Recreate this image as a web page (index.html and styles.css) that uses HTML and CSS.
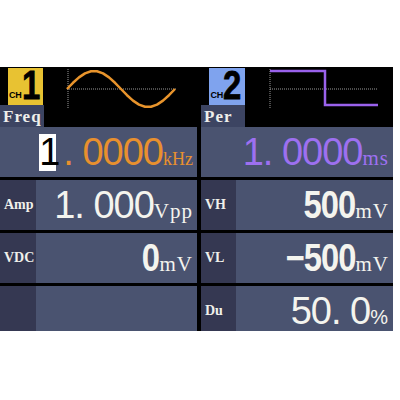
FILE: index.html
```html
<!DOCTYPE html>
<html>
<head>
    <title>Генератор сигналов</title>
    <link rel="stylesheet" href="styles.css">
</head>
<body>
    <div class="screen">
        <div class="panel">
            <div class="head">
                <div class="badge badge-ch1"><span class="ch">CH</span><span class="num">1</span></div>
                <svg class="wave" viewBox="0 0 112 40" width="112" height="40">
                    <line x1="1" y1="21" x2="110" y2="21" class="axis"/>
                    <line x1="2" y1="1" x2="2" y2="40" class="axis"/>
                    <polyline class="sine" points="1,21 7,14.8 13,9.4 19,5.4 25,3.3 31,3.3 37,5.4 43,9.4 49,14.8 55,21 61,27.2 67,32.6 73,36.6 79,38.7 85,38.7 91,36.6 97,32.6 103,27.2 109,21"/>
                </svg>
            </div>
            <div class="tabs"><span class="tab">Freq</span></div>
            <div class="rows">
                <div class="row">
                    <div class="value orange"><span class="cursor">1</span>. 0000<span class="unit unit-khz">kHz</span></div>
                </div>
                <div class="row">
                    <div class="label">Amp</div>
                    <div class="value">1. 000<span class="unit">Vpp</span></div>
                </div>
                <div class="row">
                    <div class="label">VDC</div>
                    <div class="value"><span class="bold">0</span><span class="unit">mV</span></div>
                </div>
                <div class="row">
                    <div class="label"></div>
                    <div class="value"></div>
                </div>
            </div>
        </div>

        <div class="panel">
            <div class="head">
                <div class="badge badge-ch2"><span class="ch">CH</span><span class="num">2</span></div>
                <svg class="wave" viewBox="0 0 112 40" width="112" height="40">
                    <line x1="2" y1="21" x2="110" y2="21" class="axis"/>
                    <line x1="2" y1="1" x2="2" y2="40" class="axis"/>
                    <polyline class="square" points="2,3 57,3 57,37 110,37"/>
                </svg>
            </div>
            <div class="tabs"><span class="tab">Per</span></div>
            <div class="rows">
                <div class="row">
                    <div class="value purple">1. 0000<span class="unit">ms</span></div>
                </div>
                <div class="row">
                    <div class="label">VH</div>
                    <div class="value"><span class="bold">500</span><span class="unit">mV</span></div>
                </div>
                <div class="row">
                    <div class="label">VL</div>
                    <div class="value"><span class="bold">&minus;500</span><span class="unit">mV</span></div>
                </div>
                <div class="row">
                    <div class="label">Du</div>
                    <div class="value">50. 0<span class="unit unit-pct">%</span></div>
                </div>
            </div>
        </div>
    </div>
</body>
</html>
```

FILE: styles.css
```css
body { margin: 0; background: #fff; font-family: "Liberation Sans", Arial, sans-serif; }

.screen {
    margin-top: 67px;
    width: 393px;
    height: 264px;
    background: #000;
    display: grid;
    grid-template-columns: 197px 192px;
    column-gap: 4px;
}
.panel { display: flex; flex-direction: column; min-width: 0; }

.head { height: 38px; display: flex; align-items: flex-start; padding-left: 8px; gap: 23px; }
.badge {
    margin-top: 1px;
    width: 35px;
    height: 37px;
    display: flex;
    align-items: flex-end;
    justify-content: center;
    color: #000;
    font-weight: bold;
    box-sizing: border-box;
    padding-bottom: 4px;
}
.badge-ch1 { background: #e8c232; }
.badge-ch2 { background: #7fa3ee; width: 36px; }
.ch { font-size: 9px; line-height: 10px; margin-bottom: 1px; }
.num {
    font-size: 40px;
    line-height: 32px;
    transform: scaleX(0.82);
    margin-left: -2px;
    -webkit-text-stroke: 0.8px #000;
}

.wave { margin-top: 1px; overflow: visible; flex: none; }
.axis { stroke: #9a9a9a; stroke-width: 1; stroke-dasharray: 1 1; }
.sine { fill: none; stroke: #e8942c; stroke-width: 2.5; stroke-linejoin: round; }
.square { fill: none; stroke: #9a62ec; stroke-width: 2.5; }

.tabs { height: 22px; }
.tab {
    display: inline-block;
    width: 44px;
    height: 22px;
    padding: 1px 0 0 3px;
    box-sizing: border-box;
    background: #3c4462;
    color: #eeeeea;
    font: bold 17px/21px "Liberation Serif", serif;
    letter-spacing: 1px;
}

.rows { flex: 1; display: flex; flex-direction: column; gap: 3px; }
.row { flex: 1; display: flex; background: #4a5370; }
.label {
    width: 36px;
    padding-left: 4px;
    box-sizing: border-box;
    background: #353852;
    display: flex;
    align-items: center;
    color: #f0f0ea;
    font: bold 14px "Liberation Serif", serif;
}
.panel + .panel .label { width: 35px; }

.value {
    flex: 1;
    display: flex;
    justify-content: flex-end;
    align-items: baseline;
    padding: 0 4px 0 0;
    color: #f4f4ee;
    font-size: 38px;
    letter-spacing: -1px;
    line-height: 50px;
    white-space: pre;
}
.orange { color: #e8902e; }
.purple { color: #9d70f0; }

.cursor {
    display: inline-block;
    width: 17px;
    height: 37px;
    background: #fff;
    color: #000;
    text-align: center;
    line-height: 36px;
    margin-right: 7px;
    letter-spacing: 0;
}
.bold { font-weight: bold; display: inline-block; transform: scaleX(0.86); transform-origin: right; }

.unit { font: 21px "Liberation Serif", serif; letter-spacing: 1px; }
.unit-khz { font-size: 18px; letter-spacing: 0; }
.unit-pct { font-family: "Liberation Sans", sans-serif; font-size: 20px; }
```
